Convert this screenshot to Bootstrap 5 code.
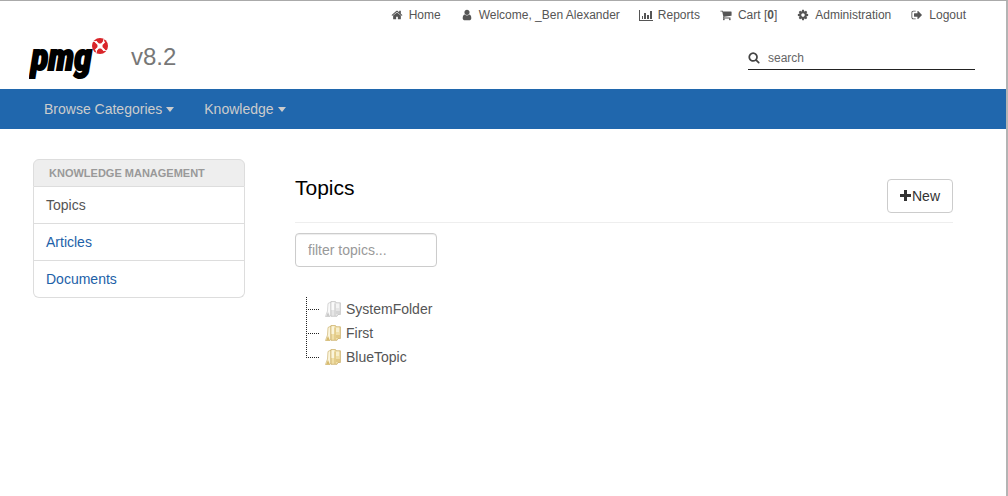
<!DOCTYPE html>
<html lang="en">
<head>
<meta charset="utf-8">
<meta name="viewport" content="width=device-width, initial-scale=1">
<title>Knowledge Management - Topics</title>
<link rel="stylesheet" href="https://cdn.jsdelivr.net/npm/bootstrap@5.3.0/dist/css/bootstrap.min.css">
<style>
  body { font-family: "Liberation Sans", Arial, sans-serif; font-size: 14px; line-height: 20px; color: #555; background: #fff; }
  .page-frame { border-top: 1px solid #aaa; border-right: 2px solid #b4b4b4; }
  a { text-decoration: none; }
  .glyph { width: 14px; height: 14px; fill: currentColor; flex: none; }
  .site-head { padding: 4px 31px 5px 29px; min-height: 88px; }
  .utility { gap: 19px; font-size: 12px; padding-right: 9px; }
  .utility a { color: #555; gap: 5px; }
  .utility .glyph { height: 12px; }
  .brand-row { margin-top: 11px; }
  .brand-mark { width: 80px; height: 46px; flex: none; }
  .brand-mark text { font-family: "Liberation Sans Narrow", "Roboto Condensed", "Open Sans Condensed", "Liberation Sans", sans-serif; font-weight: 700; font-style: italic; font-size: 36px; stroke: #000; stroke-width: 2px; }
  .version { font-size: 24px; line-height: 32px; color: #777; margin: 5px 0 0 22px; }
  .site-search { width: 227px; height: 24px; border-bottom: 1px solid #222; color: #444; margin-top: 10px; }
  .site-search .glyph { width: 12px; height: 13px; }
  .site-search input { border: 0; padding: 0; margin-left: 8px; font-size: 12px; width: 100%; outline: 0; background: transparent; }
  .site-search input::placeholder { color: #666; opacity: 1; }
  .main-bar { background: #2067ad; padding: 0 29px; }
  .main-bar .nav-link { color: #ccc; padding: 10px 15px; line-height: 20px; }
  .main-bar .dropdown-toggle::after { border-top-width: 5px; border-left-width: 4px; border-right-width: 4px; margin-left: 4px; vertical-align: 2px; }
  .workspace { padding: 30px 53px 24px 33px; gap: 50px; }
  .side { width: 212px; flex: none; }
  .side .list-group { --bs-list-group-border-color: #ddd; --bs-list-group-border-radius: 6px; }
  .side .list-group-item { padding: 8px 12px; color: #1c61a8; }
  .side .list-group-item.current { color: #555; }
  .side .side-title { background: #eee; color: #999; font-size: 11px; font-weight: 700; line-height: 16px; padding: 5px 15px; }
  .topic-head { border-bottom: 1px solid #eee; padding: 16px 0 9px; }
  .topic-head h1 { font-size: 21px; line-height: 26px; font-weight: 400; color: #000; }
  .new-btn { height: 34px; margin-top: 4px; padding: 6px 12px; font-size: 14px; line-height: 20px; color: #333; border: 1px solid #ccc; border-radius: 4px; background: #fff; }
  .new-btn .glyph { width: 12px; height: 12px; }
  .filter-box { width: 142px; height: 34px; margin-top: 10px; padding: 6px 12px; font-size: 14px; line-height: 20px; border: 1px solid #ccc; border-radius: 4px; box-shadow: inset 0 1px 1px rgba(0,0,0,.075); }
  .filter-box::placeholder { color: #999; opacity: 1; }
  .topic-tree { margin: 30px 0 0 11px; }
  .topic-tree a { color: #555; height: 24px; line-height: 24px; }
  .branch { width: 13px; height: 24px; margin-right: 6px; stroke: #222; stroke-dasharray: 1 1; flex: none; }
  .folder { width: 16px; height: 16px; margin-right: 5px; flex: none; --pale: #fbf5dc; --mid: #f0dfa8; --deep: #d8bb6e; --edge: #c5a75c; }
  .folder.system { --pale: #fafafa; --mid: #e6e6e6; --deep: #cacaca; --edge: #bdbdbd; }
</style>
</head>
<body>
<svg width="0" height="0" class="position-absolute" aria-hidden="true">
  <defs>
    <symbol id="folderShape" viewBox="0 0 16 16">
      <path d="M3 2.500L6 1v13l-1 1.500H.5L2.500 10z" fill="var(--pale)" stroke="var(--edge)" stroke-width=".6"/>
      <path d="M1 15.500L3 11l2 4.500z" fill="var(--deep)"/>
      <path d="M6 .6h4.500l.5 1.200h4.400v11.700H13L12 15.300H6z" fill="var(--mid)" stroke="var(--edge)" stroke-width=".7"/>
      <path d="M6.500 1.200h3V9h-3z" fill="var(--pale)"/>
      <path d="M10 2.500V15" fill="none" stroke="var(--deep)"/>
      <path d="M11 2.500h3V7h-3z" fill="var(--pale)" opacity=".7"/>
      <path d="M11 10h4v3h-4z" fill="var(--deep)" opacity=".6"/>
    </symbol>
  </defs>
</svg>
<div class="page-frame min-vh-100">
  <header class="site-head">
    <nav class="utility d-flex justify-content-end" aria-label="Account">
      <a href="#" class="d-flex align-items-center"><svg class="glyph" viewBox="0 0 1792 1792"><path d="M1472 992v480q0 26-19 45t-45 19h-384v-384h-256v384h-384q-26 0-45-19t-19-45v-480q0-1 .5-3t.5-3l575-474 575 474q1 2 1 6zm223-69l-62 74q-8 9-21 11h-3q-13 0-21-7l-692-577-692 577q-12 8-24 7-13-2-21-11l-62-74q-8-10-7-23.500t11-21.500l719-599q32-26 76-26t76 26l244 204v-195q0-14 9-23t23-9h192q14 0 23 9t9 23v408l219 182q10 8 11 21.500t-7 23.500z"/></svg>Home</a>
      <a href="#" class="d-flex align-items-center"><svg class="glyph" viewBox="0 0 1792 1792"><path d="M1536 1399q0 109-62.500 187t-150.500 78h-854q-88 0-150.500-78t-62.500-187q0-85 8.500-160.500t31.500-152 58.500-131 94-89 134.500-34.500q131 128 313 128t313-128q76 0 134.500 34.500t94 89 58.500 131 31.500 152 8.500 160.500zm-256-887q0 159-112.500 271.500t-271.500 112.500-271.500-112.500-112.500-271.500 112.500-271.500 271.500-112.500 271.500 112.500 112.500 271.500z"/></svg>Welcome, _Ben Alexander</a>
      <a href="#" class="d-flex align-items-center"><svg class="glyph" viewBox="0 1 14 12"><path d="M0 2h1v10h13v1H0zM3 8h1v3H3zM5 5h2v6H5zM8 7h2v4H8zM11 3h2v8h-2z"/></svg>Reports</a>
      <a href="#" class="d-flex align-items-center"><svg class="glyph" viewBox="0 0 1792 1792"><path d="M704 1536q0 52-38 90t-90 38-90-38-38-90 38-90 90-38 90 38 38 90zm896 0q0 52-38 90t-90 38-90-38-38-90 38-90 90-38 90 38 38 90zm128-1088v512q0 24-16.500 42.500t-40.500 21.500l-1044 122q13 60 13 70 0 16-24 64h920q26 0 45 19t19 45-19 45-45 19h-1024q-26 0-45-19t-19-45q0-11 8-31.500t16-36 21.500-40 15.500-29.500l-177-823h-204q-26 0-45-19t-19-45 19-45 45-19h256q16 0 28.500 6.500t19.500 15.500 13 24.500 8 26 5.500 29.500 4.500 26h1201q26 0 45 19t19 45z"/></svg><span>Cart [<b>0</b>]</span></a>
      <a href="#" class="d-flex align-items-center"><svg class="glyph" viewBox="0 0 1792 1792"><path d="M1152 896q0-106-75-181t-181-75-181 75-75 181 75 181 181 75 181-75 75-181zm512-109v222q0 12-8 23t-20 13l-185 28q-19 54-39 91 35 50 107 138 10 12 10 25t-9 23q-27 37-99 108t-94 71q-12 0-26-9l-138-108q-44 23-91 38-16 136-29 186-7 28-36 28h-222q-14 0-24.500-8.500t-11.500-21.500l-28-184q-49-16-90-37l-141 107q-10 9-25 9-14 0-25-11-126-114-165-168-7-10-7-23 0-12 8-23 15-21 51-66.500t54-70.500q-27-50-41-99l-183-27q-13-2-21-12.500t-8-23.500v-222q0-12 8-23t19-13l186-28q14-46 39-92-40-57-107-138-10-12-10-24 0-10 9-23 26-36 98.500-107.500t94.500-71.500q13 0 26 10l138 107q44-23 91-38 16-136 29-186 7-28 36-28h222q14 0 24.500 8.500t11.500 21.500l28 184q49 16 90 37l142-107q9-9 24-9 13 0 25 10 129 119 165 170 7 8 7 22 0 12-8 23-15 21-51 66.500t-54 70.500q26 50 41 98l183 28q13 2 21 12.500t8 23.500z"/></svg>Administration</a>
      <a href="#" class="d-flex align-items-center"><svg class="glyph" viewBox="0 0 1792 1792"><path d="M704 1440q0 4 1 20t.5 26.500-3 23.500-10 19.500-20.500 6.500h-320q-119 0-203.500-84.500t-84.500-203.500v-704q0-119 84.500-203.500t203.500-84.500h320q13 0 22.500 9.500t9.500 22.500q0 4 1 20t.5 26.500-3 23.500-10 19.500-20.500 6.500h-320q-66 0-113 47t-47 113v704q0 66 47 113t113 47h312l11.500 1 11.500 3 8 5.500 7 9 2 13.500zm928-544q0 26-19 45l-544 544q-19 19-45 19t-45-19-19-45v-288h-448q-26 0-45-19t-19-45v-384q0-26 19-45t45-19h448v-288q0-26 19-45t45-19 45 19l544 544q19 19 19 45z"/></svg>Logout</a>
    </nav>
    <div class="brand-row d-flex align-items-start">
      <a href="#" class="d-flex text-black" aria-label="pmg home">
        <svg class="brand-mark" viewBox="0 0 80 46">
          <text x="2" y="34">pmg</text>
          <circle cx="71" cy="10" r="8" fill="#d9252a"/>
          <g stroke="#fff" fill="#fff"><path d="M66.500 5.500l9 9M75.500 5.500l-9 9" stroke-width="2"/><path d="M71 7l3 3-3 3-3-3z" stroke="none"/><path d="M64 5l4 1M75 3l-1 4M78 15l-4-1M67 17l1-4" stroke-width="1"/></g>
        </svg>
      </a>
      <span class="version">v8.2</span>
      <form class="site-search ms-auto d-flex align-items-center" role="search">
        <label for="siteSearch" class="d-flex" aria-label="Search"><svg class="glyph" viewBox="0 0 1792 1792"><path d="M1216 832q0-185-131.500-316.500t-316.500-131.500-316.500 131.500-131.500 316.500 131.500 316.500 316.500 131.500 316.500-131.500 131.500-316.500zm512 832q0 52-38 90t-90 38q-54 0-90-38l-343-342q-179 124-399 124-143 0-273.500-55.500t-225-150-150-225-55.500-273.500 55.500-273.500 150-225 225-150 273.500-55.500 273.500 55.500 225 150 150 225 55.500 273.500q0 220-124 399l343 343q37 37 37 90z"/></svg></label>
        <input id="siteSearch" type="text" placeholder="search">
      </form>
    </div>
  </header>
  <nav class="main-bar nav" aria-label="Main">
    <a href="#" class="nav-link dropdown-toggle">Browse Categories</a>
    <a href="#" class="nav-link dropdown-toggle">Knowledge</a>
  </nav>
  <div class="workspace d-flex align-items-start">
    <aside class="side">
      <div class="list-group">
        <div class="list-group-item side-title text-uppercase">Knowledge Management</div>
        <a href="#" class="list-group-item current">Topics</a>
        <a href="#" class="list-group-item">Articles</a>
        <a href="#" class="list-group-item">Documents</a>
      </div>
    </aside>
    <main class="flex-grow-1">
      <div class="topic-head d-flex justify-content-between align-items-start">
        <h1 class="mb-0">Topics</h1>
        <button type="button" class="new-btn d-flex align-items-center"><svg class="glyph" viewBox="0 0 12 12"><path d="M4 0h3v4h4v3H7v4H4V7H0V4h4z"/></svg>New</button>
      </div>
      <input class="filter-box d-block" type="text" placeholder="filter topics..." aria-label="Filter topics">
      <div class="topic-tree">
        <a href="#" class="d-flex align-items-center"><svg class="branch" viewBox="0 0 13 24"><path d="M.5 0v24M2 12.500h11"/></svg><svg class="folder system"><use href="#folderShape"/></svg>SystemFolder</a>
        <a href="#" class="d-flex align-items-center"><svg class="branch" viewBox="0 0 13 24"><path d="M.5 0v24M2 12.500h11"/></svg><svg class="folder"><use href="#folderShape"/></svg>First</a>
        <a href="#" class="d-flex align-items-center"><svg class="branch" viewBox="0 0 13 24"><path d="M.5 0v13M2 12.500h11"/></svg><svg class="folder"><use href="#folderShape"/></svg>BlueTopic</a>
      </div>
    </main>
  </div>
</div>
<script src="https://cdn.jsdelivr.net/npm/bootstrap@5.3.0/dist/js/bootstrap.bundle.min.js"></script>
</body>
</html>
